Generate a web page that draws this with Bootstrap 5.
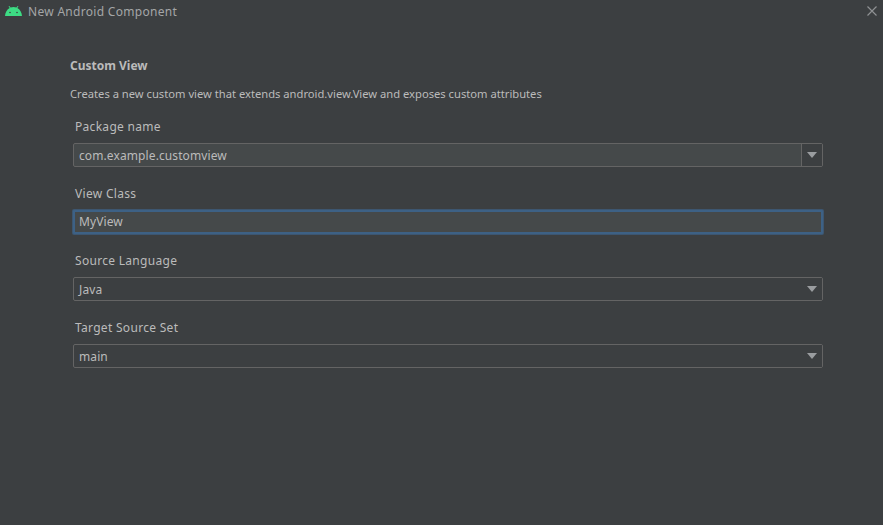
<!DOCTYPE html>
<html lang="en">
<head>
  <meta charset="UTF-8">
  <meta name="viewport" content="width=device-width, initial-scale=1">
  <title>New Android Component</title>
  <link href="https://cdn.jsdelivr.net/npm/bootstrap@5.3.0/dist/css/bootstrap.min.css" rel="stylesheet">
  <style>
    html, body {
      height: 100%;
    }
    body {
      background-color: #3c3f41;
      color: #bbbbbb;
      font-family: "Noto Sans", "Open Sans", sans-serif;
      font-size: 12px;
      overflow: hidden;
    }
    .title-bar {
      height: 24px;
      padding: 0 6px 0 5px;
    }
    .title-logo {
      margin-top: -2px;
    }
    .title-text {
      font-size: 12px;
      color: #a4a6a7;
      margin-left: 6px;
      letter-spacing: .3px;
    }
    .btn-x {
      width: 10px;
      height: 10px;
      margin-top: -3px;
    }
    .dlg-body {
      padding: 34px 60px 0 70px;
    }
    .dlg-heading {
      font-size: 12px;
      font-weight: 700;
      line-height: 16px;
      margin: 0 0 12px;
      color: #bbbbbb;
    }
    .dlg-desc {
      font-size: 11.2px;
      line-height: 16px;
      margin: 0 0 16px;
    }
    .field-group {
      margin: 0 0 18px 3px;
    }
    .field-label {
      display: block;
      line-height: 18px;
      margin: 0 0 7px 2px;
      letter-spacing: .3px;
    }
    .ide-input {
      display: flex;
      align-items: center;
      height: 24px;
      background-color: #3c3f41;
      border: 1px solid #646464;
      border-radius: 2px;
      color: #bbbbbb;
      font-size: 12px;
      letter-spacing: .1px;
      padding: 0 0 0 5px;
    }
    .ide-input.editable {
      background-color: #45494a;
    }
    .ide-input.focused {
      background-color: #45494a;
      border: 2px solid #3d6185;
      border-radius: 1px;
      box-shadow: 0 0 0 1px rgba(61, 97, 133, .7);
      padding-left: 4px;
    }
    .ide-value {
      flex-grow: 1;
      padding-top: 2px;
    }
    .focused .ide-value {
      padding-top: 0;
    }
    .ide-arrow {
      flex: 0 0 21px;
      align-self: stretch;
      display: flex;
      align-items: center;
      justify-content: center;
      background-color: #3c3f41;
    }
    .ide-arrow.split {
      border-left: 1px solid #646464;
    }
    .ide-caret {
      width: 0;
      height: 0;
      border-left: 5px solid transparent;
      border-right: 5px solid transparent;
      border-top: 6px solid #9a9da0;
    }
  </style>
</head>
<body>

<div class="title-bar d-flex align-items-center">
  <svg class="title-logo" width="17" height="10" viewBox="0 0 17 10" aria-hidden="true">
    <path d="M0 10C.2 6.400 2 3.400 4.700 2L3.500 .3 4.300 0 5.600 1.600C6.500 1.200 7.500 1 8.500 1s2 .2 2.900.6L12.700 0l.8.3L12.300 2C15 3.400 16.800 6.400 17 10Z" fill="#3ddc84"/>
    <circle cx="5" cy="6.500" r=".8" fill="#3c3f41"/>
    <circle cx="12" cy="6.500" r=".8" fill="#3c3f41"/>
  </svg>
  <span class="title-text">New Android Component</span>
  <svg class="btn-x ms-auto" viewBox="0 0 10 10" aria-hidden="true">
    <path d="M.5 .5l9 9M9.500 .5l-9 9" stroke="#8f9193" stroke-width="1.200" fill="none"/>
  </svg>
</div>

<div class="dlg-body">
  <h1 class="dlg-heading">Custom View</h1>
  <p class="dlg-desc">Creates a new custom view that extends android.view.View and exposes custom attributes</p>

  <div class="field-group">
    <label class="field-label">Package name</label>
    <div class="ide-input editable">
      <span class="ide-value">com.example.customview</span>
      <span class="ide-arrow split"><span class="ide-caret"></span></span>
    </div>
  </div>

  <div class="field-group">
    <label class="field-label">View Class</label>
    <div class="ide-input focused">
      <span class="ide-value">MyView</span>
    </div>
  </div>

  <div class="field-group">
    <label class="field-label">Source Language</label>
    <div class="ide-input">
      <span class="ide-value">Java</span>
      <span class="ide-arrow"><span class="ide-caret"></span></span>
    </div>
  </div>

  <div class="field-group">
    <label class="field-label">Target Source Set</label>
    <div class="ide-input">
      <span class="ide-value">main</span>
      <span class="ide-arrow"><span class="ide-caret"></span></span>
    </div>
  </div>
</div>

<script src="https://cdn.jsdelivr.net/npm/bootstrap@5.3.0/dist/js/bootstrap.bundle.min.js"></script>
</body>
</html>
